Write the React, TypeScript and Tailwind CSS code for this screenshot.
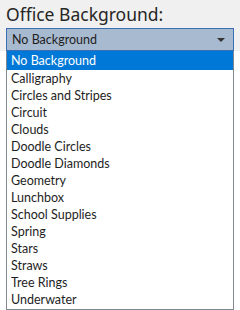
const options = [
  "No Background",
  "Calligraphy",
  "Circles and Stripes",
  "Circuit",
  "Clouds",
  "Doodle Circles",
  "Doodle Diamonds",
  "Geometry",
  "Lunchbox",
  "School Supplies",
  "Spring",
  "Stars",
  "Straws",
  "Tree Rings",
  "Underwater",
];

export default function App() {
  const selected = "No Background";

  return (
    <div className="h-[310px] w-[240px] bg-white font-['Lato',sans-serif] text-[#1e1e1e]">
      <div className="h-[51px] bg-[#f0f0f0] pl-[6px] pr-[6px] pt-[2px]">
        <div className="h-[26px] font-['Noto_Sans',sans-serif] text-[17.5px] leading-[25px] text-[#262626]">
          Office Background:
        </div>
        <div className="flex h-[23px] w-[228px] items-center justify-between border border-[#3b6fb4] bg-[#a8bad0] pl-[5px] pr-[8px]">
          <span className="mt-[2px] text-[12.5px] leading-none">{selected}</span>
          <svg width="8" height="4" viewBox="0 0 8 4">
            <path d="M0 0h8L4 4z" fill="#333" />
          </svg>
        </div>
      </div>
      <ul className="ml-[6px] h-[259px] w-[228px] border border-t-0 border-[#828790] bg-white">
        {options.map((opt, i) => (
          <li
            key={opt}
            className={
              i === 0
                ? "h-[19px] bg-[#0078d7] pl-[4px] pt-[1px] text-[12.5px] leading-[18px] text-white"
                : "h-[17px] pl-[4px] pt-[1px] text-[12.5px] leading-[16px]"
            }
          >
            {opt}
          </li>
        ))}
      </ul>
    </div>
  );
}
